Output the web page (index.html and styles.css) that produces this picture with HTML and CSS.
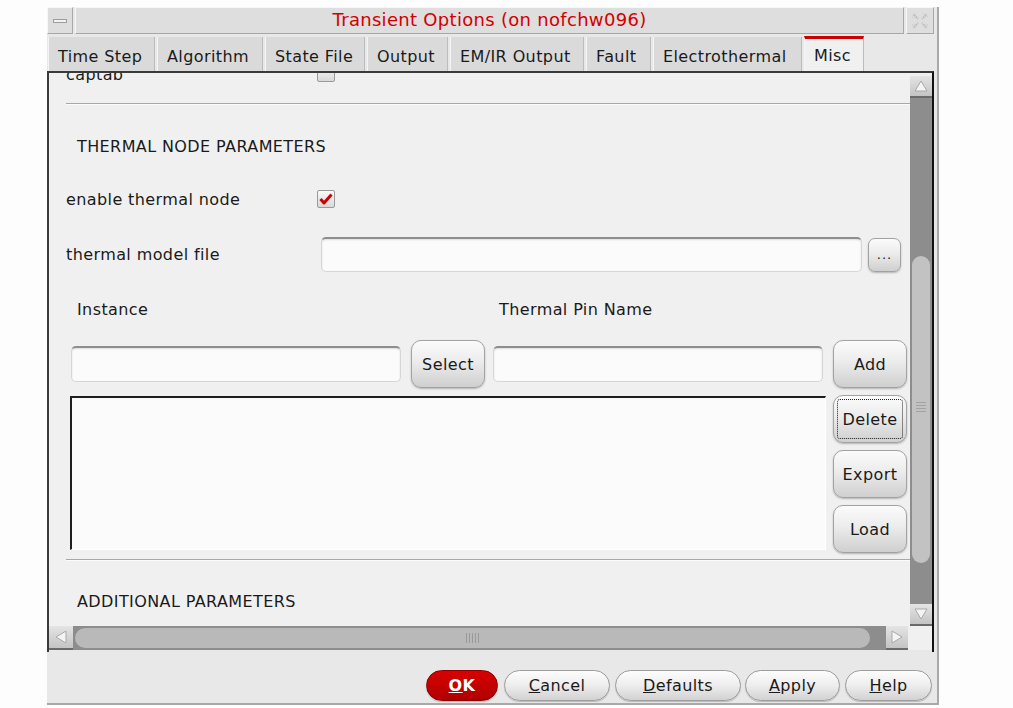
FILE: index.html
```html
<!doctype html>
<html lang="en">
<head>
  <meta charset="utf-8" />
  <title>Transient Options</title>
  <link rel="stylesheet" href="styles.css">
</head>
<body>

  <div class="window">
    <div class="titlebar">
      <div class="tb-box menu"><span class="dash"></span></div>
      <div class="tb-title">Transient Options (on nofchw096)</div>
      <div class="tb-box close">
        <svg width="18" height="18" viewBox="0 0 18 18">
          <path d="M3 3 L7 7 M15 3 L11 7 M3 15 L7 11 M15 15 L11 11" stroke="#b8b8b8" stroke-width="2" stroke-dasharray="1.5 1" fill="none"/>
          <path d="M2 6 L2 2 L6 2 M12 2 L16 2 L16 6 M2 12 L2 16 L6 16 M16 12 L16 16 L12 16" stroke="#c8c8c8" stroke-width="1" stroke-dasharray="1 1" fill="none"/>
        </svg>
      </div>
    </div>

    <div class="tabs">
      <div class="tab">Time Step</div>
      <div class="tab">Algorithm</div>
      <div class="tab">State File</div>
      <div class="tab">Output</div>
      <div class="tab">EM/IR Output</div>
      <div class="tab">Fault</div>
      <div class="tab">Electrothermal</div>
      <div class="tab active">Misc</div>
    </div>

    <div class="panel">
      <div class="panel-main">
        <div class="viewport">
          <div class="content">

            <div class="row captab">
              <span class="lbl">captab</span>
              <span class="check"></span>
            </div>
            <div class="sep"></div>

            <div class="heading">THERMAL NODE PARAMETERS</div>

            <div class="row enable">
              <span class="lbl">enable thermal node</span>
              <span class="check">
                <svg width="14" height="12" viewBox="0 0 14 12">
                  <path d="M1.5 6 L5 10 L12.5 1.5" stroke="#d10000" stroke-width="3" fill="none" stroke-linejoin="round"/>
                </svg>
              </span>
            </div>

            <div class="row model">
              <span class="lbl">thermal model file</span>
              <div class="field model-field"></div>
              <button class="btn dots">...</button>
            </div>

            <div class="col-labels">
              <span class="inst-lbl">Instance</span>
              <span>Thermal Pin Name</span>
            </div>

            <div class="pick-row">
              <div class="field pick-field"></div>
              <button class="btn side">Select</button>
              <div class="field pick-field pin"></div>
              <button class="btn side add">Add</button>
            </div>

            <div class="list-row">
              <div class="listbox"></div>
              <div class="side-btns">
                <button class="btn side focus"><span>Delete</span></button>
                <button class="btn side">Export</button>
                <button class="btn side">Load</button>
              </div>
            </div>

            <div class="sep low"></div>
            <div class="heading last">ADDITIONAL PARAMETERS</div>

          </div>
        </div>

        <div class="vscroll">
          <div class="arrow up">
            <svg width="14" height="12" viewBox="0 0 14 12"><path d="M7 1 L13 11 L1 11 Z" fill="#f4f4f4" stroke="#a9a9a9"/></svg>
          </div>
          <div class="vtrack">
            <div class="vthumb"><span class="grip v"></span></div>
          </div>
          <div class="arrow down">
            <svg width="14" height="12" viewBox="0 0 14 12"><path d="M7 11 L13 1 L1 1 Z" fill="#f4f4f4" stroke="#a9a9a9"/></svg>
          </div>
        </div>
      </div>

      <div class="hscroll">
        <div class="arrow left">
          <svg width="12" height="14" viewBox="0 0 12 14"><path d="M1 7 L11 1 L11 13 Z" fill="#f4f4f4" stroke="#a9a9a9"/></svg>
        </div>
        <div class="htrack">
          <div class="hthumb"><span class="grip h"></span></div>
        </div>
        <div class="arrow right">
          <svg width="12" height="14" viewBox="0 0 12 14"><path d="M11 7 L1 1 L1 13 Z" fill="#f4f4f4" stroke="#a9a9a9"/></svg>
        </div>
        <div class="corner"></div>
      </div>
    </div>

    <div class="footer">
      <button class="pill ok"><u>O</u>K</button>
      <button class="pill cancel"><u>C</u>ancel</button>
      <button class="pill defaults"><u>D</u>efaults</button>
      <button class="pill apply"><u>A</u>pply</button>
      <button class="pill help"><u>H</u>elp</button>
    </div>
  </div>

</body>
</html>
```

FILE: styles.css
```css
:root{
  --win:#e8e8e8;
  --pane:#f0f0f0;
  --text:#1a1a1a;
  --track:#8d8d8d;
  --thumb:#c2c2c2;
}
*{ box-sizing:border-box; }

body{
  margin:0;
  background:#fdfdfd;
  font-family:"DejaVu Sans", Verdana, sans-serif;
  font-size:16px;
  letter-spacing:0.4px;
  color:var(--text);
}

button{
  font:inherit;
  letter-spacing:inherit;
  color:var(--text);
  cursor:pointer;
}

.window{
  margin:7px 0 0 47px;
  width:892px;
  height:698px;
  background:var(--win);
  border-right:2px solid #a9a9a9;
  border-bottom:2px solid #a9a9a9;
  display:flex;
  flex-direction:column;
}

/* title bar */
.titlebar{
  display:flex;
  height:27px;
  gap:2px;
  padding-right:3px;
}
.tb-box{
  width:26px;
  background:#dedede;
  border:1px solid #f6f6f6;
  border-right-color:#a8a8a8;
  border-bottom-color:#a8a8a8;
  display:flex;
  align-items:center;
  justify-content:center;
}
.tb-box.close{ width:28px; }
.dash{
  width:14px;
  height:4px;
  background:#f2f2f2;
  border:1px solid #9c9c9c;
}
.tb-title{
  flex:1;
  background:#dedede;
  border:1px solid #f6f6f6;
  border-right-color:#a8a8a8;
  border-bottom-color:#a8a8a8;
  color:#d40000;
  font-size:18px;
  letter-spacing:0.3px;
  text-align:center;
  line-height:24px;
  white-space:nowrap;
}

/* tabs */
.tabs{
  display:flex;
  margin-top:3px;
  height:34px;
  padding-left:1px;
  gap:2px;
}
.tab{
  background:#dadada;
  border-left:1px solid #f4f4f4;
  border-right:1px solid #bcbcbc;
  display:flex;
  align-items:center;
  white-space:nowrap;
  padding:5px 0 0 9px;
}
.tab:nth-child(1){ width:107px; }
.tab:nth-child(2){ width:106px; }
.tab:nth-child(3){ width:100px; }
.tab:nth-child(4){ width:81px; }
.tab:nth-child(5){ width:134px; }
.tab:nth-child(6){ width:65px; }
.tab:nth-child(7){ width:149px; }
.tab.active{
  width:60px;
  margin-top:-1px;
  background:#f0f0f0;
  border-top:3px solid #cc0000;
  padding-top:1px;
}

/* main bordered panel */
.panel{
  height:581px;
  margin-right:3px;
  border-top:2px solid #3a3a3a;
  border-left:2px solid #3a3a3a;
  border-right:2px solid #111;
  display:flex;
  flex-direction:column;
}
.panel-main{
  display:flex;
  height:553px;
}
.viewport{
  flex:1;
  overflow:hidden;
  background:var(--pane);
}

.row{
  display:flex;
  align-items:center;
  padding-left:17px;
}
.lbl{ width:251px; }

/* row scrolled half out of view at the top */
.captab{ height:20px; align-items:flex-start; }
.captab .lbl{ line-height:4px; }
.captab .check{ margin-top:-9px; }

.enable{ height:24px; }
.model{ height:35px; margin-top:26px; }

.sep{
  margin:10px 0 0 17px;
  height:2px;
  border-top:1px solid #a8a8a8;
  border-bottom:1px solid #fbfbfb;
}
.sep.low{ margin-top:6px; }

.heading{
  height:82px;
  display:flex;
  align-items:center;
  padding-left:28px;
}
.heading.last{ height:80px; }

.check{
  width:18px;
  height:18px;
  border:1px solid #9a9a9a;
  border-radius:2px;
  background:linear-gradient(#fafafa, #d8d8d8);
  display:flex;
  align-items:center;
  justify-content:center;
}

.field{
  height:36px;
  background:#fbfbfb;
  border:1px solid #d6d6d6;
  border-top:2px solid #8e8e8e;
  border-radius:5px;
  box-shadow:inset 0 1px 2px rgba(0,0,0,0.12);
}
.model-field{
  width:541px;
  height:35px;
  margin-left:4px;
}

.btn{
  height:48px;
  width:74px;
  border:1px solid #a2a2a2;
  border-radius:10px;
  background:linear-gradient(#fbfbfb 0%, #ececec 45%, #cfcfcf 100%);
  box-shadow:0 1px 2px rgba(0,0,0,0.25);
  padding:0;
  font-size:16px;
}
.btn.dots{
  width:33px;
  height:34px;
  margin-left:6px;
  border-radius:7px;
  font-size:13px;
  letter-spacing:1px;
}

.col-labels{
  height:68px;
  padding:6px 0 0 28px;
  display:flex;
  align-items:center;
}
.inst-lbl{ width:422px; }

.pick-row{
  height:48px;
  display:flex;
  align-items:center;
  padding-left:22px;
}
.pick-field{ width:330px; }
.pick-row .btn{ margin-left:10px; }
.pick-row .pin{ margin-left:8px; }

.list-row{
  display:flex;
  margin-top:7px;
  padding-left:21px;
}
.listbox{
  width:756px;
  height:154px;
  margin-top:1px;
  background:#fbfbfb;
  border-top:2px solid #1e1e1e;
  border-left:2px solid #1e1e1e;
  border-right:1px solid #fff;
  border-bottom:1px solid #fff;
}
.side-btns{
  display:flex;
  flex-direction:column;
  gap:7px;
  margin-left:7px;
}
.btn.focus{
  padding:3px;
}
.btn.focus span{
  display:flex;
  align-items:center;
  justify-content:center;
  height:100%;
  border:1px dotted #222;
  border-radius:3px;
}

/* scrollbars */
.vscroll{
  width:22px;
  display:flex;
  flex-direction:column;
  padding-top:3px;
  background:var(--pane);
}
.arrow{
  background:linear-gradient(#e4e4e4, #c4c4c4);
  display:flex;
  align-items:center;
  justify-content:center;
}
.arrow.up{ height:22px; border-bottom:2px solid #6a6a6a; }
.arrow.down{ height:22px; border-bottom:2px solid #6a6a6a; }
.vtrack{
  flex:1;
  background:var(--track);
}
.vthumb{
  margin:158px 2px 0 2px;
  height:307px;
  border-radius:10px;
  background:var(--thumb);
  display:flex;
  justify-content:center;
  padding-top:146px;
}
.grip.v{
  width:10px;
  height:12px;
  background:repeating-linear-gradient(#a2a2a2 0 1px, transparent 1px 3px);
}

.hscroll{
  height:24px;
  display:flex;
}
.arrow.left{ width:24px; border-bottom:2px solid #6a6a6a; }
.arrow.right{ width:22px; border-bottom:2px solid #6a6a6a; }
.htrack{
  flex:1;
  background:var(--track);
  padding:2px 0 2px 2px;
}
.hthumb{
  width:795px;
  height:100%;
  border-radius:10px;
  background:#b9b9b9;
  display:flex;
  align-items:center;
  justify-content:center;
}
.grip.h{
  width:13px;
  height:10px;
  background:repeating-linear-gradient(90deg, #9a9a9a 0 1px, transparent 1px 3px);
}
.corner{ width:24px; background:var(--pane); }

/* dialog buttons */
.footer{
  flex:1;
  display:flex;
  justify-content:flex-end;
  align-items:flex-start;
  gap:5px;
  padding:18px 5px 0 0;
}
.pill{
  height:31px;
  border:1px solid #9c9c9c;
  border-radius:16px;
  background:linear-gradient(#fdfdfd 0%, #ededed 50%, #d2d2d2 100%);
  box-shadow:0 1px 1px rgba(0,0,0,0.2);
  padding:0;
  font-size:16px;
}
.pill.ok{
  width:72px;
  margin-right:1px;
  background:linear-gradient(#d80000, #b00000);
  border-color:#8a0000;
  color:#fff;
  font-weight:bold;
}
.pill.cancel{ width:106px; }
.pill.defaults{ width:126px; }
.pill.apply{ width:95px; margin-left:-1px; }
.pill.help{ width:87px; }
```
